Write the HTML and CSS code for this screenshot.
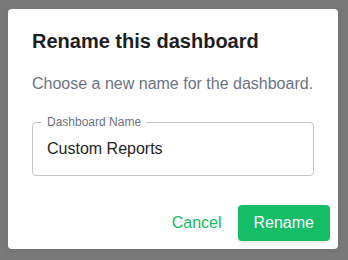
FILE: index.html
```html
<!DOCTYPE html>
<html>
<head>
<meta charset="utf-8">
<link rel="stylesheet" href="styles.css">
</head>
<body>
<div class="dialog">
  <h2 class="title">Rename this dashboard</h2>
  <p class="desc">Choose a new name for the dashboard.</p>
  <fieldset class="field">
    <legend class="label">Dashboard Name</legend>
    <input class="input" type="text" value="Custom Reports">
  </fieldset>
  <div class="actions">
    <button class="btn btn-text">Cancel</button>
    <button class="btn btn-primary">Rename</button>
  </div>
</div>
</body>
</html>
```
FILE: styles.css
```css
html, body {
  margin: 0;
  padding: 0;
}
body {
  width: 348px;
  height: 260px;
  background: #797979;
  font-family: "Liberation Sans", Arial, sans-serif;
  overflow: hidden;
}
.dialog {
  margin: 9px 0 0 8px;
  width: 330px;
  box-sizing: border-box;
  background: #fff;
  border-radius: 4px;
  box-shadow: 0 2px 6px rgba(0,0,0,0.08);
  display: flex;
  flex-direction: column;
}
.title {
  margin: 0;
  padding: 16px 24px 0;
  font-size: 20px;
  line-height: 32px;
  font-weight: 700;
  color: #1e1e1e;
}
.desc {
  margin: 15px 24px 0;
  font-size: 16px;
  line-height: 24px;
  color: #6b7382;
}
.field {
  margin: 19px 24px 0;
  padding: 0 13px 0 9px;
  border: 1px solid #c4c4c4;
  border-radius: 4px;
  min-width: 0;
}
.label {
  padding: 0 5px;
  font-size: 12px;
  line-height: 14px;
  color: #6b7382;
}
.input {
  display: block;
  width: 100%;
  box-sizing: border-box;
  border: 0;
  outline: none;
  margin: 0;
  padding: 8px 0 14px 5px;
  height: 46px;
  font-family: "Liberation Sans", Arial, sans-serif;
  font-size: 16px;
  line-height: 24px;
  color: #1f1f1f;
  background: transparent;
}
.actions {
  display: flex;
  justify-content: flex-end;
  gap: 8px;
  padding: 29px 8px 8px;
}
.btn {
  font-family: "Liberation Sans", Arial, sans-serif;
  font-size: 16px;
  height: 36px;
  border: 0;
  border-radius: 4px;
  cursor: pointer;
}
.btn-text {
  padding: 0 8px;
  background: transparent;
  color: #14b866;
}
.btn-primary {
  padding: 0 16px;
  background: #14bd66;
  color: #fff;
  box-shadow: 0 1px 3px rgba(0,0,0,0.12);
}
```
